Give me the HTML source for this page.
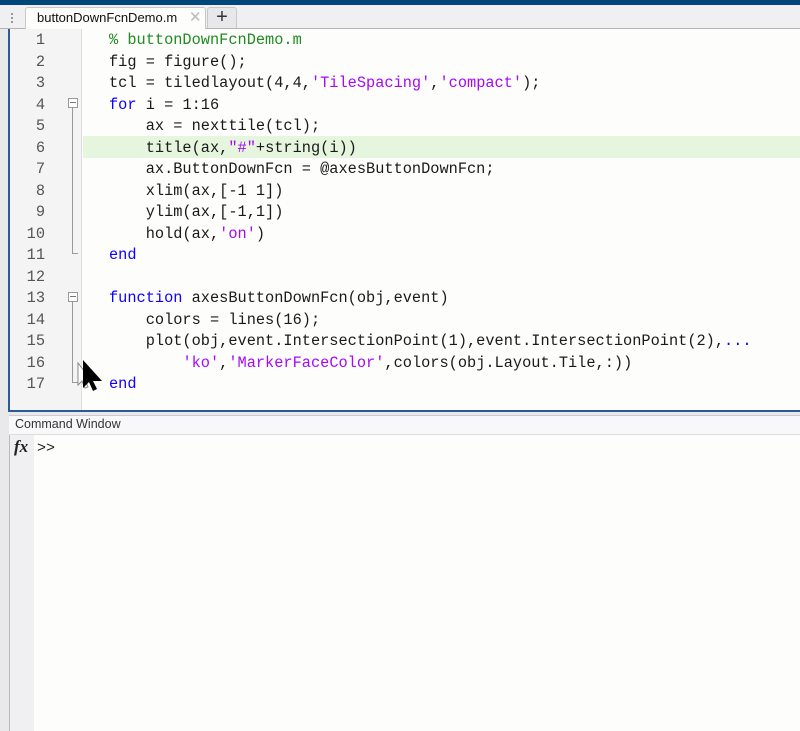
<!DOCTYPE html>
<html><head><meta charset="utf-8"><style>
*{margin:0;padding:0;box-sizing:border-box}
body{width:800px;height:731px;overflow:hidden;background:#e9e9eb;font-family:"Liberation Sans",sans-serif;position:relative}
.abs{position:absolute}
.code{font-family:"Liberation Mono",monospace;font-size:15.3px;white-space:pre;color:#1a1a1a;line-height:21.5px;height:21.5px}
.ln{font-family:"Liberation Mono",monospace;font-size:15.3px;color:#555;width:45px;text-align:right;line-height:21.5px;left:0}
.k{color:#0e00ff}.s{color:#a709f5}.c{color:#228b22}
#t{position:absolute;left:0;top:2px;width:800px;height:400px}
</style></head><body>
<div class="abs" style="left:0;top:0;width:800px;height:5px;background:#00467a"></div>
<div class="abs" style="left:0;top:5px;width:800px;height:24px;background:#f0f0f2;border-bottom:1px solid #b4b4b4"></div>
<div class="abs" style="left:11px;top:13px;width:2px;height:10px;border-left:2px dotted #999"></div>
<div class="abs" style="left:25px;top:7px;width:181px;height:22px;background:#fdfdfb;border:1px solid #c8c8c8;border-bottom:none;border-radius:3px 3px 0 0"></div>
<div class="abs" style="left:37px;top:10px;font-size:13px;color:#111">buttonDownFcnDemo.m</div>
<div class="abs" style="left:189px;top:8px;font-size:15px;color:#bbb">✕</div>
<div class="abs" style="left:207px;top:7px;width:30px;height:21px;background:#e8e8ea;border:1px solid #c8c8c8;border-bottom:none;border-radius:3px 3px 0 0;text-align:center;font-size:20px;line-height:19px;color:#333">+</div>
<div class="abs" style="left:8px;top:29px;width:792px;height:383px;background:#fdfdfb;border-left:2px solid #2a5a9a;border-bottom:2px solid #2a5a9a"></div>
<div class="abs" style="left:10px;top:29px;width:72px;height:381px;background:#f4f4f4;border-right:1px solid #ddd"></div>
<div class="abs" style="left:83px;top:136px;width:717px;height:21.5px;background:#e6f5de"></div>
<div class="abs" style="left:68px;top:98px;width:10px;height:10px;border:1px solid #999;background:#fff"></div>
<div class="abs" style="left:70px;top:102px;width:6px;height:1px;background:#777"></div>
<div class="abs" style="left:72px;top:108px;width:6px;height:146px;border-left:1px solid #999;border-bottom:1px solid #999"></div>
<div class="abs" style="left:68px;top:292px;width:10px;height:10px;border:1px solid #999;background:#fff"></div>
<div class="abs" style="left:70px;top:296px;width:6px;height:1px;background:#777"></div>
<div class="abs" style="left:72px;top:302px;width:6px;height:81px;border-left:1px solid #999;border-bottom:1px solid #999"></div>
<div id="t">
<div class="abs ln" style="top:28px">1</div>
<div class="abs ln" style="top:49.5px">2</div>
<div class="abs ln" style="top:71px">3</div>
<div class="abs ln" style="top:92.5px">4</div>
<div class="abs ln" style="top:114px">5</div>
<div class="abs ln" style="top:135.5px">6</div>
<div class="abs ln" style="top:157px">7</div>
<div class="abs ln" style="top:178.5px">8</div>
<div class="abs ln" style="top:200px">9</div>
<div class="abs ln" style="top:221.5px">10</div>
<div class="abs ln" style="top:243px">11</div>
<div class="abs ln" style="top:264.5px">12</div>
<div class="abs ln" style="top:286px">13</div>
<div class="abs ln" style="top:307.5px">14</div>
<div class="abs ln" style="top:329px">15</div>
<div class="abs ln" style="top:350.5px">16</div>
<div class="abs ln" style="top:372px">17</div>
<div class="abs code" style="left:109px;top:28px"><span class="c">% buttonDownFcnDemo.m</span></div>
<div class="abs code" style="left:109px;top:49.5px">fig = figure();</div>
<div class="abs code" style="left:109px;top:71px">tcl = tiledlayout(4,4,<span class="s">'TileSpacing'</span>,<span class="s">'compact'</span>);</div>
<div class="abs code" style="left:109px;top:92.5px"><span class="k">for</span> i = 1:16</div>
<div class="abs code" style="left:109px;top:114px">    ax = nexttile(tcl);</div>
<div class="abs code" style="left:109px;top:135.5px">    title(ax,<span class="s">"#"</span>+string(i))</div>
<div class="abs code" style="left:109px;top:157px">    ax.ButtonDownFcn = @axesButtonDownFcn;</div>
<div class="abs code" style="left:109px;top:178.5px">    xlim(ax,[-1 1])</div>
<div class="abs code" style="left:109px;top:200px">    ylim(ax,[-1,1])</div>
<div class="abs code" style="left:109px;top:221.5px">    hold(ax,<span class="s">'on'</span>)</div>
<div class="abs code" style="left:109px;top:243px"><span class="k">end</span></div>
<div class="abs code" style="left:109px;top:286px"><span class="k">function</span> axesButtonDownFcn(obj,event)</div>
<div class="abs code" style="left:109px;top:307.5px">    colors = lines(16);</div>
<div class="abs code" style="left:109px;top:329px">    plot(obj,event.IntersectionPoint(1),event.IntersectionPoint(2),<span class="k">...</span></div>
<div class="abs code" style="left:109px;top:350.5px">        <span class="s">'ko'</span>,<span class="s">'MarkerFaceColor'</span>,colors(obj.Layout.Tile,:))</div>
<div class="abs code" style="left:109px;top:372px"><span class="k">end</span></div>
</div>
<svg class="abs" style="left:70px;top:355px" width="40" height="40">
<path d="M8 8 L8 30 L12 26 L15 33 L18 32 L15 25 L21 25 Z" fill="#fff" stroke="#888" stroke-width="1"/>
<path d="M13 5 L13 33 L19 27 L23 36 L27 34 L23 26 L32 26 Z" fill="#000"/>
</svg>
<div class="abs" style="left:9px;top:415px;width:791px;height:20px;background:#f8f8fa;border-top:1px solid #ccc;border-bottom:1px solid #ddd"></div>
<div class="abs" style="left:15px;top:417px;font-size:12.5px;color:#333">Command Window</div>
<div class="abs" style="left:9px;top:435px;width:791px;height:296px;background:#fdfdfb;border-left:1px solid #bbb"></div>
<div class="abs" style="left:10px;top:435px;width:24px;height:296px;background:#f0f0f3"></div>
<div class="abs" style="left:14px;top:437px;font-family:'Liberation Serif',serif;font-style:italic;font-weight:bold;font-size:17px;color:#222">fx</div>
<div class="abs" style="left:37px;top:440px;font-family:'Liberation Mono',monospace;font-size:15px;color:#222">&gt;&gt;</div>
</body></html>
